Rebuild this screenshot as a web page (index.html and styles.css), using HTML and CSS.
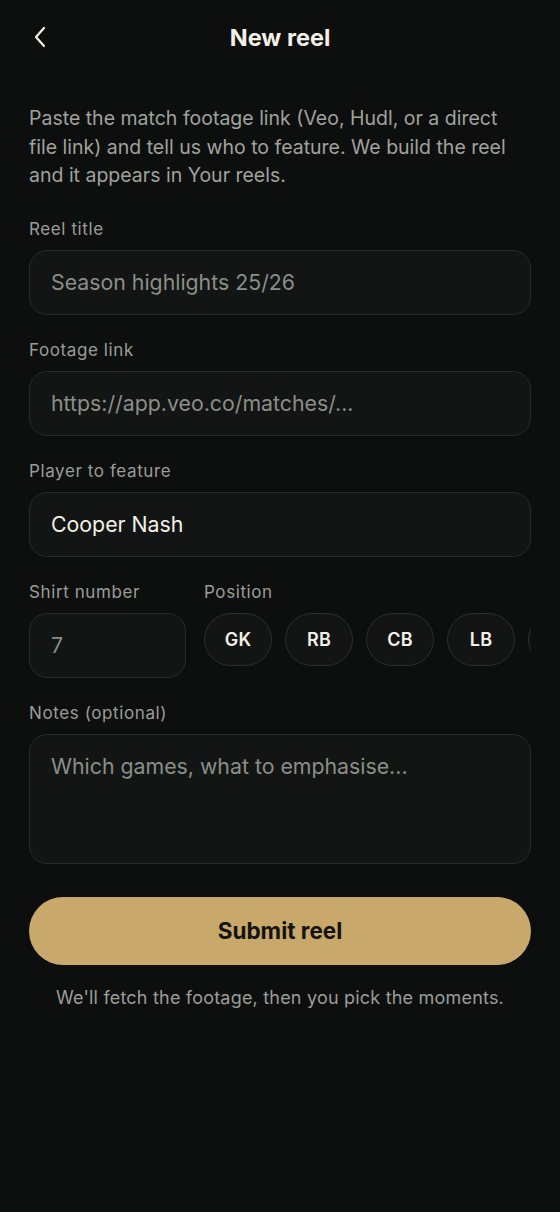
FILE: index.html
```html
<!DOCTYPE html>
<html lang="en">
<head>
<meta charset="utf-8">
<title>New reel</title>
<link rel="stylesheet" href="styles.css">
</head>
<body>
<div class="screen">
  <header class="topbar">
    <button class="back" aria-label="Back">
      <svg width="14" height="22" viewBox="0 0 14 22" fill="none"><path d="M11 2 L3 11 L11 20" stroke="#f4f0e6" stroke-width="2.2" stroke-linecap="round" stroke-linejoin="round"/></svg>
    </button>
    <h1 class="title">New reel</h1>
    <span></span>
  </header>

  <p class="intro">Paste the match footage link (Veo, Hudl, or a direct file link) and tell us who to feature. We build the reel and it appears in Your reels.</p>

  <div class="field">
    <label class="label">Reel title</label>
    <input class="input" placeholder="Season highlights 25/26">
  </div>

  <div class="field">
    <label class="label">Footage link</label>
    <input class="input" placeholder="https://app.veo.co/matches/...">
  </div>

  <div class="field">
    <label class="label">Player to feature</label>
    <input class="input" value="Cooper Nash">
  </div>

  <div class="row">
    <div class="field shirt">
      <label class="label">Shirt number</label>
      <input class="input" placeholder="7">
    </div>
    <div class="field position">
      <label class="label">Position</label>
      <div class="chips">
        <button class="chip">GK</button>
        <button class="chip">RB</button>
        <button class="chip">CB</button>
        <button class="chip">LB</button>
        <button class="chip" aria-label="More positions"></button>
      </div>
    </div>
  </div>

  <div class="field">
    <label class="label">Notes (optional)</label>
    <textarea class="input notes" placeholder="Which games, what to emphasise..."></textarea>
  </div>

  <button class="submit">Submit reel</button>
  <p class="footnote">We'll fetch the footage, then you pick the moments.</p>
</div>
</body>
</html>
```

FILE: styles.css
```css
* { box-sizing: border-box; }
html, body {
  margin: 0;
  padding: 0;
  background: #0d0f0e;
}
body {
  font-family: Inter, "Noto Sans", "Liberation Sans", sans-serif;
  color: #f4f0e6;
  min-height: 1212px;
}
.screen {
  padding: 0 29px;
}
.topbar {
  height: 74px;
  display: grid;
  grid-template-columns: 1fr auto 1fr;
  align-items: center;
}
.back {
  background: none;
  border: 0;
  padding: 0 0 0 4px;
  margin: 0;
  width: 30px;
  height: 30px;
  display: flex;
  align-items: center;
  cursor: pointer;
}
.title {
  margin: 0;
  font-size: 23.5px;
  font-weight: 700;
  color: #f4f0e6;
  letter-spacing: 0;
}
.intro {
  margin: 30px 0 29px;
  padding-right: 14px;
  font-size: 19.5px;
  line-height: 28.5px;
  color: #a0a29d;
}
.field {
  display: flex;
  flex-direction: column;
  margin-bottom: 25px;
}
.label {
  font-size: 17px;
  line-height: 20px;
  color: #9b9d98;
  margin-bottom: 11px;
  letter-spacing: 0.6px;
}
.input {
  height: 65px;
  width: 100%;
  background: #121513;
  border: 1px solid #282b28;
  border-radius: 18px;
  padding: 0 21px;
  font-family: inherit;
  font-size: 21.3px;
  color: #f4f0e6;
  outline: none;
}
.input::placeholder {
  color: #8b8e89;
  opacity: 1;
}
.row {
  display: flex;
  gap: 18px;
}
.shirt {
  width: 157px;
  flex: none;
}
.position {
  flex: 1;
  min-width: 0;
}
.chips {
  display: flex;
  gap: 13px;
  overflow: hidden;
}
.chip {
  flex: none;
  width: 68px;
  height: 53px;
  border-radius: 27px;
  background: #121513;
  border: 1px solid #2c2f2c;
  color: #f4f0e6;
  font-family: inherit;
  font-size: 18px;
  font-weight: 600;
  letter-spacing: 0.3px;
  padding: 0;
}
.notes {
  height: 130px;
  resize: none;
  padding: 18px 21px;
  line-height: 26px;
  display: block;
}
.submit {
  display: block;
  width: 100%;
  height: 68px;
  margin-top: 33px;
  border: 0;
  border-radius: 34px;
  background: #c9a86b;
  color: #14130f;
  font-family: inherit;
  font-size: 22.5px;
  font-weight: 700;
  cursor: pointer;
}
.footnote {
  margin: 22px 0 0;
  text-align: center;
  font-size: 18px;
  line-height: 22px;
  letter-spacing: 0.2px;
  color: #9b9d98;
}
```
